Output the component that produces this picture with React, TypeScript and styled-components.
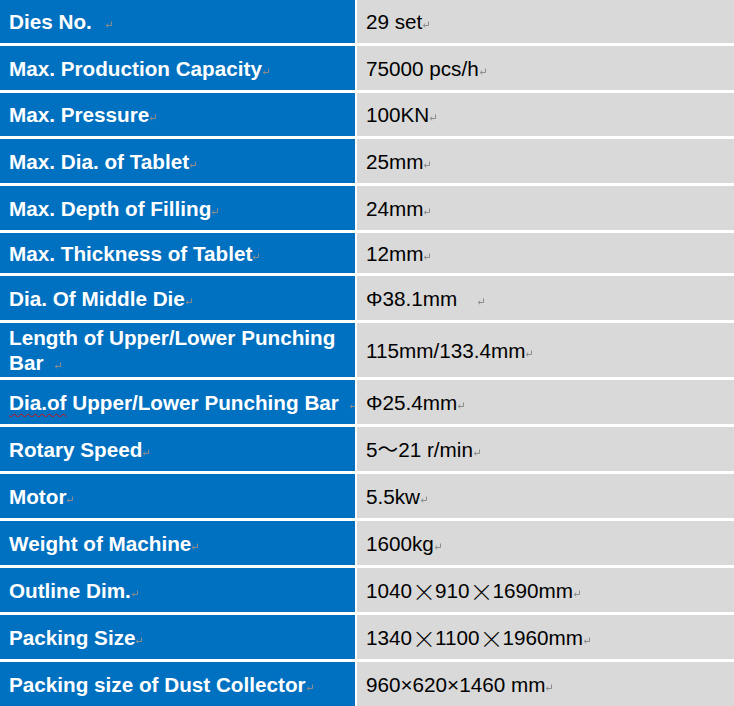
import React from "react";
import styled, { createGlobalStyle } from "styled-components";

const GlobalStyle = createGlobalStyle`
  html, body {
    margin: 0;
    padding: 0;
    background: #ffffff;
  }
  body {
    font-family: "Liberation Sans", Arial, "Noto Sans CJK SC", sans-serif;
  }
`;

const Table = styled.div`
  display: grid;
  grid-template-columns: 355px 377px;
  column-gap: 2px;
  row-gap: 3px;
  width: 734px;
  background: #ffffff;
`;

const Cell = styled.div<{ $h: number }>`
  height: ${(p) => p.$h}px;
  display: flex;
  align-items: center;
  padding-left: 9px;
  font-size: 20.7px;
  line-height: 25px;
  white-space: nowrap;
  overflow: hidden;
`;

const LabelCell = styled(Cell)`
  background: #0070c0;
  color: #ffffff;
  font-weight: bold;
`;

const ValueCell = styled(Cell)`
  background: #d9d9d9;
  color: #000000;
  font-weight: normal;
`;

const Mark = styled.svg`
  display: inline-block;
  vertical-align: 1px;
  color: #8c8c8c;
`;

// wide (full-width) multiplication sign as Word draws it from the CJK font
const Wide = styled.span`
  display: inline-block;
  width: 23px;
  text-align: center;
  font-family: "Noto Sans CJK SC", sans-serif;
  font-weight: 300;
  font-size: 24px;
  line-height: 25px;
  vertical-align: top;
`;

const Misspelt = styled.span`
  text-decoration: underline wavy #d01010;
  text-decoration-thickness: 1px;
  text-underline-offset: 3px;
`;

type Spec = {
  label: React.ReactNode;
  value: React.ReactNode;
  height: number;
  labelGap?: number;
  valueGap?: number;
};

const X = () => <Wide>×</Wide>;

const specs: Spec[] = [
  { label: "Dies No.", value: "29 set", height: 43, labelGap: 13 },
  { label: "Max. Production Capacity", value: "75000 pcs/h", height: 44 },
  { label: "Max. Pressure", value: "100KN", height: 43 },
  { label: "Max. Dia. of Tablet", value: "25mm", height: 44 },
  { label: "Max. Depth of Filling", value: "24mm", height: 44 },
  { label: "Max. Thickness of Tablet", value: "12mm", height: 40 },
  { label: "Dia. Of Middle Die", value: "Φ38.1mm", height: 44, valueGap: 20 },
  {
    label: (
      <>
        Length of Upper/Lower Punching
        <br />
        Bar
      </>
    ),
    value: "115mm/133.4mm",
    height: 54,
    labelGap: 10,
  },
  {
    label: (
      <>
        <Misspelt>Dia.of</Misspelt> Upper/Lower Punching Bar
      </>
    ),
    value: "Φ25.4mm",
    height: 44,
    labelGap: 10,
  },
  { label: "Rotary Speed", value: "5～21 r/min", height: 44 },
  { label: "Motor", value: "5.5kw", height: 44 },
  { label: "Weight of Machine", value: "1600kg", height: 44 },
  {
    label: "Outline Dim.",
    value: (
      <>
        1040
        <X />
        910
        <X />
        1690mm
      </>
    ),
    height: 44,
  },
  {
    label: "Packing Size",
    value: (
      <>
        1340
        <X />
        1100
        <X />
        1960mm
      </>
    ),
    height: 44,
  },
  {
    label: "Packing size of Dust Collector",
    value: "960×620×1460 mm",
    height: 44,
  },
];

function ParaMark({ gap = 0 }: { gap?: number }) {
  return (
    <Mark style={{ marginLeft: gap }} width="8" height="7" viewBox="0 0 8 7">
      <path d="M6.5 0.5 V4.5 H1.5" fill="none" stroke="currentColor" strokeWidth="1" />
      <path d="M3.2 2.6 L1.2 4.5 L3.2 6.4" fill="none" stroke="currentColor" strokeWidth="1" />
    </Mark>
  );
}

export default function App() {
  return (
    <>
      <GlobalStyle />
      <Table>
        {specs.map((s, i) => (
          <React.Fragment key={i}>
            <LabelCell $h={s.height}>
              <span>
                {s.label}
                <ParaMark gap={s.labelGap} />
              </span>
            </LabelCell>
            <ValueCell $h={s.height}>
              <span>
                {s.value}
                <ParaMark gap={s.valueGap} />
              </span>
            </ValueCell>
          </React.Fragment>
        ))}
      </Table>
    </>
  );
}
